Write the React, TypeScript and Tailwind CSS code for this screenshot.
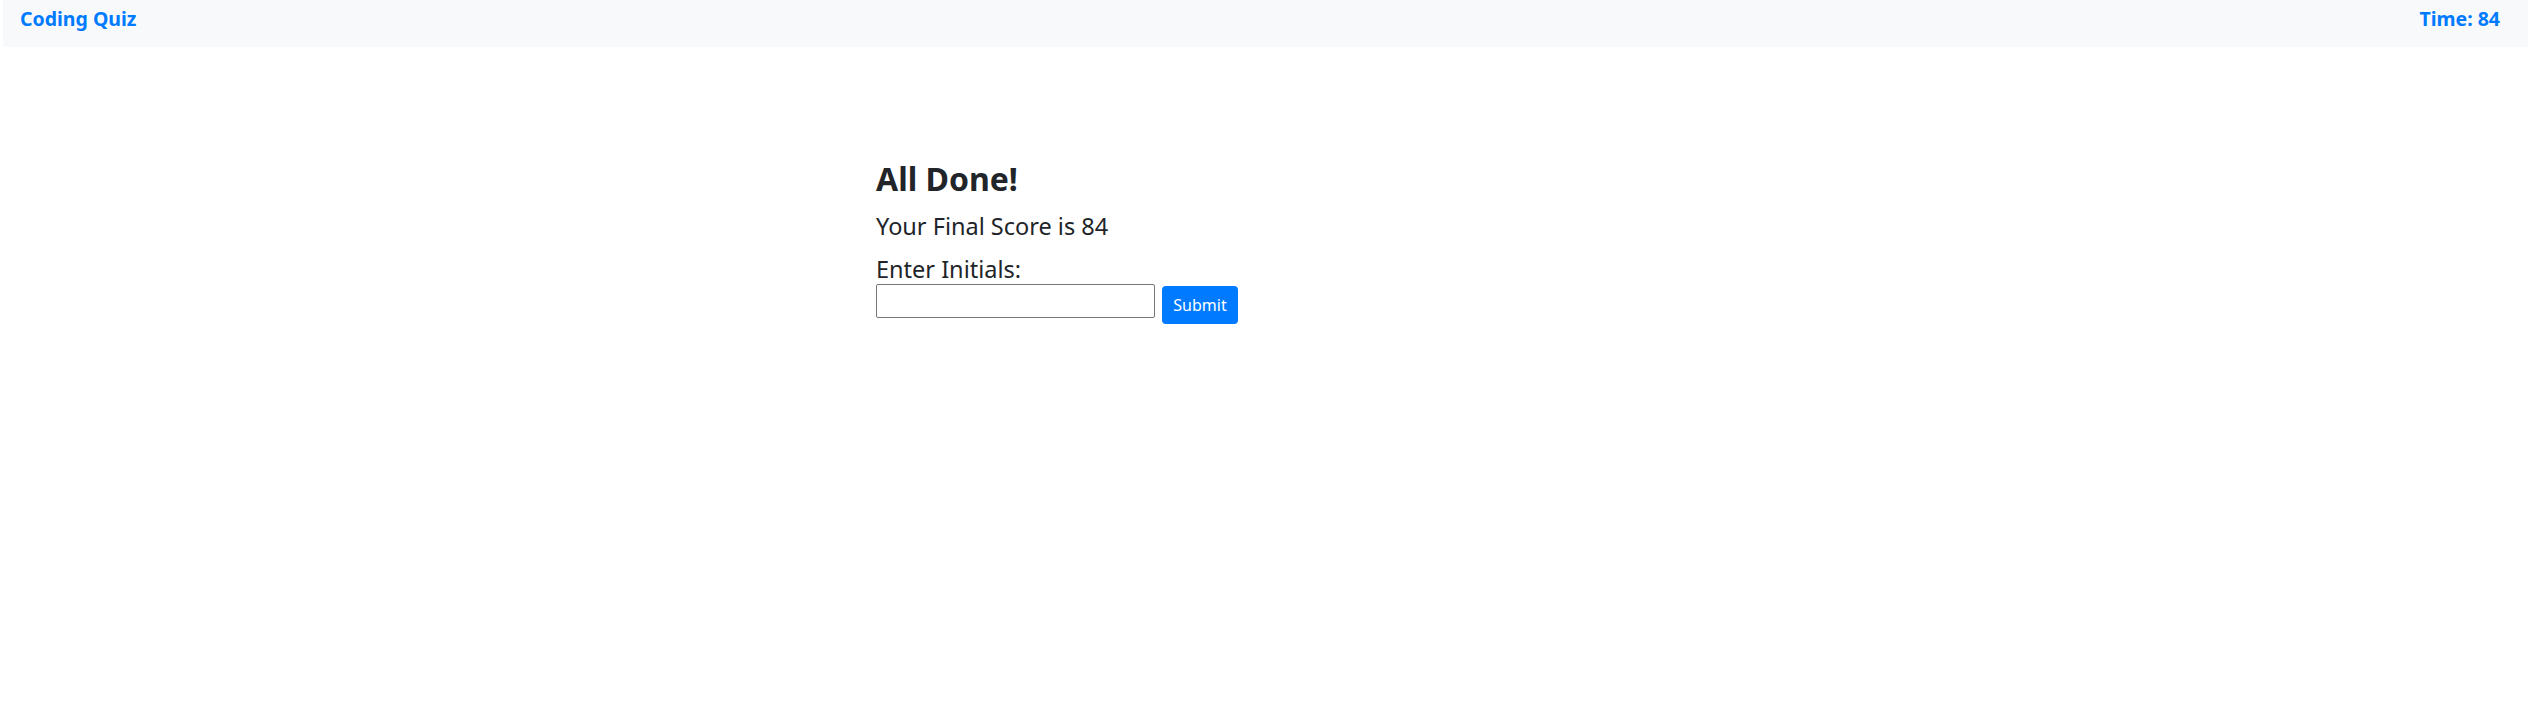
const App = () => {
    return (
        <div className="min-h-screen bg-white font-['Noto_Sans',sans-serif] text-[#212529]">
            {/* NAVBAR */}
            <div className="ml-[3px] flex h-[47px] items-start justify-between bg-[#f8f9fa] pl-[17px] pr-[28px] pt-[4px]">
                <span className="text-[19.5px] leading-[30px] font-bold text-[#007bff]">Coding Quiz</span>
                <span className="text-[19.5px] leading-[30px] font-bold text-[#007bff]">Time: 84</span>
            </div>

            {/* RESULTADO */}
            <div className="mx-auto w-[776px] pt-[113px]">
                <h2 className="text-[32px] leading-[38px] font-bold">All Done!</h2>
                <h4 className="mt-[14px] text-[23.5px] leading-[29px]">Your Final Score is 84</h4>
                <label className="mt-[14px] block text-[23.5px] leading-[29px]">Enter Initials:</label>
                <div className="flex items-start">
                    <input
                        type="text"
                        className="h-[34px] w-[279px] rounded-[2px] border border-[#767676] bg-white px-1"
                    />
                    <button className="ml-[7px] mt-[2px] h-[38px] w-[76px] rounded-[4px] bg-[#007bff] text-[16px] text-white">
                        Submit
                    </button>
                </div>
            </div>
        </div>
    );
};

export default App;
